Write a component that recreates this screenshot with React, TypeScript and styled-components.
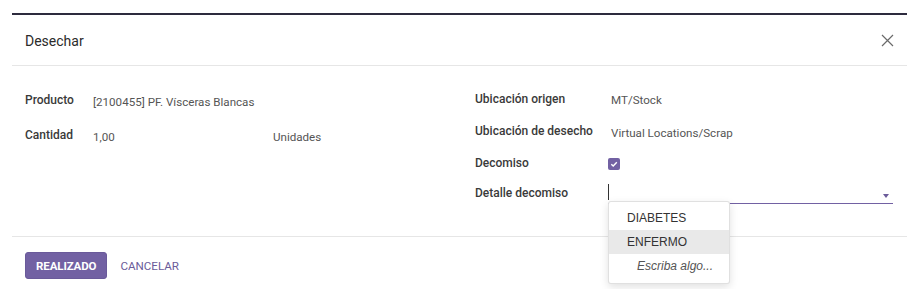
import styled, { createGlobalStyle } from 'styled-components'

const GlobalStyle = createGlobalStyle`
  body {
    margin: 0;
    background: #fff;
    font-family: Roboto, "Noto Sans", sans-serif;
    color: #212529;
  }
`

const Modal = styled.div`
  margin: 13px 0 0 12px;
  width: 895px;
  border-top: 2px solid #2d2b3e;
  background: #fff;
`

const Header = styled.div`
  height: 50px;
  display: flex;
  align-items: center;
  justify-content: space-between;
  padding: 1px 13px 0;
  box-sizing: border-box;
  height: 51px;
  border-bottom: 1px solid #e6e6e6;
`

const Title = styled.h4`
  margin: 0;
  font-size: 14px;
  font-weight: 400;
  color: #2b2b2b;
`

const CloseButton = styled.button`
  border: 0;
  background: none;
  padding: 0;
  width: 14px;
  height: 14px;
  display: flex;
  align-items: center;
  justify-content: center;
  cursor: pointer;
`

const Body = styled.div`
  height: 171px;
  box-sizing: border-box;
  padding: 17px 13px 0;
  display: grid;
  grid-template-columns: 450px 1fr;
  border-bottom: 1px solid #e6e6e6;
`

const Column = styled.div`
  display: flex;
  flex-direction: column;
`

const Row = styled.div<{ $height: number; $labelWidth: number }>`
  height: ${p => p.$height}px;
  display: grid;
  grid-template-columns: ${p => p.$labelWidth}px 1fr;
  align-items: center;
`

const Label = styled.label`
  font-size: 12px;
  font-weight: 500;
  color: #3a3a3a;
`

const Value = styled.div<{ $inset?: number }>`
  font-size: 11.6px;
  color: #555;
  padding: 3px 0 0 ${p => p.$inset ?? 0}px;
  display: flex;
  align-items: center;
`

const Quantity = styled.span`
  width: 180px;
`

const Checkbox = styled.span`
  width: 12px;
  height: 12px;
  border-radius: 2px;
  background: #7261a3;
  display: flex;
  align-items: center;
  justify-content: center;
`

const SelectField = styled.div`
  position: relative;
  width: 285px;
  height: 20px;
  border-bottom: 1px solid #7261a3;
  margin-top: 2px;
`

const TextCursor = styled.span`
  position: absolute;
  left: 0;
  top: 1px;
  width: 1px;
  height: 16px;
  background: #333;
`

const Caret = styled.span`
  position: absolute;
  right: 4px;
  top: 11px;
  width: 0;
  height: 0;
  border-left: 3px solid transparent;
  border-right: 3px solid transparent;
  border-top: 4px solid #6b5b9a;
`

const Dropdown = styled.ul`
  position: absolute;
  left: 0;
  top: 18px;
  width: 122px;
  margin: 0;
  padding: 4px 0 5px;
  list-style: none;
  background: #fff;
  border: 1px solid rgba(0, 0, 0, 0.12);
  border-radius: 3px;
  box-shadow: 0 3px 8px rgba(0, 0, 0, 0.12);
  box-sizing: border-box;
  z-index: 2;
`

const Option = styled.li<{ $active?: boolean; $hint?: boolean }>`
  height: 24px;
  display: flex;
  align-items: center;
  padding-left: ${p => (p.$hint ? 28 : 18)}px;
  font-family: "Liberation Sans", Arial, sans-serif;
  font-size: 12px;
  color: ${p => (p.$hint ? '#555' : '#333')};
  font-style: ${p => (p.$hint ? 'italic' : 'normal')};
  background: ${p => (p.$active ? '#e9e9e9' : 'transparent')};
`

const Footer = styled.div`
  padding: 15px 13px;
  display: flex;
  align-items: center;
  gap: 13px;
`

const PrimaryButton = styled.button`
  height: 27px;
  padding: 0 10px;
  border: 1px solid #6a5a9a;
  border-radius: 3px;
  background: #7261a3;
  color: #fff;
  font-family: Roboto, sans-serif;
  font-size: 11.5px;
  font-weight: 700;
  letter-spacing: -0.1px;
  cursor: pointer;
`

const LinkButton = styled.button`
  border: 0;
  background: none;
  padding: 0;
  color: #6b5b9a;
  font-family: Roboto, sans-serif;
  font-size: 11.6px;
  cursor: pointer;
`

export default function App() {
  return (
    <>
      <GlobalStyle />
      <Modal>
        <Header>
          <Title>Desechar</Title>
          <CloseButton aria-label="Cerrar">
            <svg width="13" height="13" viewBox="0 0 13 13">
              <path d="M1 1L12 12M12 1L1 12" stroke="#6a6a6a" strokeWidth="1.2" fill="none" />
            </svg>
          </CloseButton>
        </Header>
        <Body>
          <Column>
            <Row $height={34} $labelWidth={68}>
              <Label>Producto</Label>
              <Value>[2100455] PF. Vísceras Blancas</Value>
            </Row>
            <Row $height={36} $labelWidth={68}>
              <Label>Cantidad</Label>
              <Value>
                <Quantity>1,00</Quantity>
                Unidades
              </Value>
            </Row>
          </Column>
          <Column>
            <Row $height={31} $labelWidth={133}>
              <Label>Ubicación origen</Label>
              <Value $inset={3}>MT/Stock</Value>
            </Row>
            <Row $height={34} $labelWidth={133}>
              <Label>Ubicación de desecho</Label>
              <Value $inset={3}>Virtual Locations/Scrap</Value>
            </Row>
            <Row $height={29} $labelWidth={133}>
              <Label>Decomiso</Label>
              <Value>
                <Checkbox>
                  <svg width="8" height="8" viewBox="0 0 8 8">
                    <path d="M1.3 4.2L3.2 6L6.8 2.2" stroke="#fff" strokeWidth="1.4" fill="none" />
                  </svg>
                </Checkbox>
              </Value>
            </Row>
            <Row $height={31} $labelWidth={133}>
              <Label>Detalle decomiso</Label>
              <SelectField>
                <TextCursor />
                <Caret />
                <Dropdown>
                  <Option>DIABETES</Option>
                  <Option $active>ENFERMO</Option>
                  <Option $hint>Escriba algo...</Option>
                </Dropdown>
              </SelectField>
            </Row>
          </Column>
        </Body>
        <Footer>
          <PrimaryButton>REALIZADO</PrimaryButton>
          <LinkButton>CANCELAR</LinkButton>
        </Footer>
      </Modal>
    </>
  )
}
